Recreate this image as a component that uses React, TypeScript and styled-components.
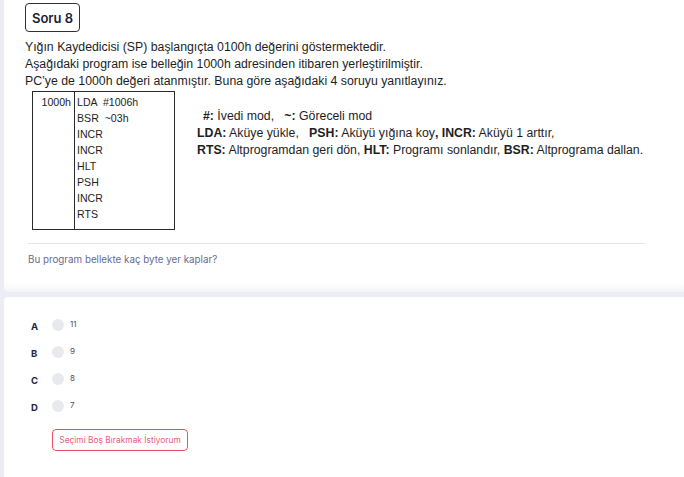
import React from "react";
import styled, { createGlobalStyle } from "styled-components";

const GlobalStyle = createGlobalStyle`
  html, body { margin: 0; padding: 0; background: #ececf4; }
  body { font-family: Inter, "Noto Sans", sans-serif; }
  * { box-sizing: border-box; }
`;

const Page = styled.div`
  display: flex;
  flex-direction: column;
  gap: 5px;
  padding-left: 4px;
  width: 684px;
  height: 477px;
  overflow: hidden;
`;

const QuestionCard = styled.section`
  background: #fff;
  border-radius: 0 0 0 4px;
  padding: 3px 39px 0 20px;
  height: 292px;
  box-shadow: inset 0 -10px 10px -8px rgba(230, 230, 238, 0.7);
`;

const Badge = styled.div`
  display: inline-flex;
  align-items: center;
  justify-content: center;
  width: 55px;
  height: 29px;
  margin-left: 1px;
  border: 1px solid #2f3040;
  border-radius: 4px;
  font-size: 13px;
  font-weight: 600;
  color: #1c1d3a;
`;

const Scan = styled.div`
  font-family: "Liberation Sans", Arial, sans-serif;
  color: #1e1e1e;
  padding-left: 1px;
  margin-top: 7px;
`;

const Para = styled.p`
  margin: 0;
  font-size: 12.3px;
  line-height: 17px;
`;

const Figure = styled.div`
  display: flex;
  align-items: flex-start;
  margin: 1px 0 0 7px;
`;

const Table = styled.div`
  display: grid;
  grid-template-columns: 42px 1fr;
  width: 143px;
  height: 139px;
  border: 1px solid #2a2a2a;
`;

const AddrCell = styled.div`
  border-right: 1px solid #2a2a2a;
  text-align: right;
  padding: 2px 3px 0 0;
  font-size: 10.6px;
  line-height: 16px;
`;

const CodeCell = styled.div`
  padding: 2px 0 0 2px;
  font-size: 10.6px;
  line-height: 16px;
`;

const CodeLine = styled.div`
  white-space: pre;
`;

const Legend = styled.div`
  margin: 17px 0 0 22px;
  font-size: 12.3px;
  line-height: 17px;
  white-space: nowrap;
`;

const LegendLine = styled.div<{ $indent?: number }>`
  padding-left: ${(p) => p.$indent ?? 0}px;
`;

const Divider = styled.hr`
  border: none;
  border-top: 1px solid #e3e3e8;
  margin: 13px 0 0 4px;
`;

const Prompt = styled.p`
  margin: 10px 0 0 4px;
  font-size: 9.8px;
  color: #676a8f;
`;

const AnswerCard = styled.section`
  background: #fff;
  border-radius: 4px 0 0 0;
  flex: 1;
  padding: 22px 0 0 27px;
`;

const Options = styled.div`
  display: flex;
  flex-direction: column;
  gap: 15px;
`;

const OptionRow = styled.label`
  display: flex;
  align-items: center;
  height: 12px;
`;

const Letter = styled.span`
  width: 21px;
  font-size: 9.5px;
  font-weight: 700;
  color: #24263f;
  padding-top: 3px;
`;

const Radio = styled.span`
  width: 12px;
  height: 12px;
  border-radius: 50%;
  background: #e8e8ef;
`;

const OptionText = styled.span`
  margin-left: 6px;
  font-size: 8px;
  color: #4a4b5c;
  margin-top: -2px;
`;

const SkipButton = styled.button`
  margin: 17px 0 0 21px;
  width: 136px;
  height: 22px;
  border: 1px solid #ee4d62;
  border-radius: 4px;
  background: #fff;
  font-family: Inter, "Noto Sans", sans-serif;
  font-size: 8.4px;
  color: #e8607a;
  padding: 0;
`;

const B = styled.b`
  font-weight: 700;
`;

const code = ["LDA  #1006h", "BSR  ~03h", "INCR", "INCR", "HLT", "PSH", "INCR", "RTS"];
const options = [
  { l: "A", v: "11" },
  { l: "B", v: "9" },
  { l: "C", v: "8" },
  { l: "D", v: "7" },
];

export default function App() {
  return (
    <>
      <GlobalStyle />
      <Page>
        <QuestionCard>
          <Badge>Soru 8</Badge>
          <Scan>
            <Para>Yığın Kaydedicisi (SP) başlangıçta 0100h değerini göstermektedir.</Para>
            <Para>Aşağıdaki program ise belleğin 1000h adresinden itibaren yerleştirilmiştir.</Para>
            <Para>PC’ye de 1000h değeri atanmıştır. Buna göre aşağıdaki 4 soruyu yanıtlayınız.</Para>
            <Figure>
              <Table>
                <AddrCell>1000h</AddrCell>
                <CodeCell>
                  {code.map((c, i) => (
                    <CodeLine key={i}>{c}</CodeLine>
                  ))}
                </CodeCell>
              </Table>
              <Legend>
                <LegendLine $indent={6}>
                  <B>#:</B> İvedi mod,&nbsp;&nbsp; <B>~:</B> Göreceli mod
                </LegendLine>
                <LegendLine>
                  <B>LDA:</B> Aküye yükle,&nbsp;&nbsp; <B>PSH:</B> Aküyü yığına koy<B>,</B> <B>INCR:</B> Aküyü 1 arttır,
                </LegendLine>
                <LegendLine>
                  <B>RTS:</B> Altprogramdan geri dön, <B>HLT:</B> Programı sonlandır, <B>BSR:</B> Altprograma dallan.
                </LegendLine>
              </Legend>
            </Figure>
          </Scan>
          <Divider />
          <Prompt>Bu program bellekte kaç byte yer kaplar?</Prompt>
        </QuestionCard>
        <AnswerCard>
          <Options>
            {options.map((o) => (
              <OptionRow key={o.l}>
                <Letter>{o.l}</Letter>
                <Radio />
                <OptionText>{o.v}</OptionText>
              </OptionRow>
            ))}
          </Options>
          <SkipButton>Seçimi Boş Bırakmak İstiyorum</SkipButton>
        </AnswerCard>
      </Page>
    </>
  );
}
